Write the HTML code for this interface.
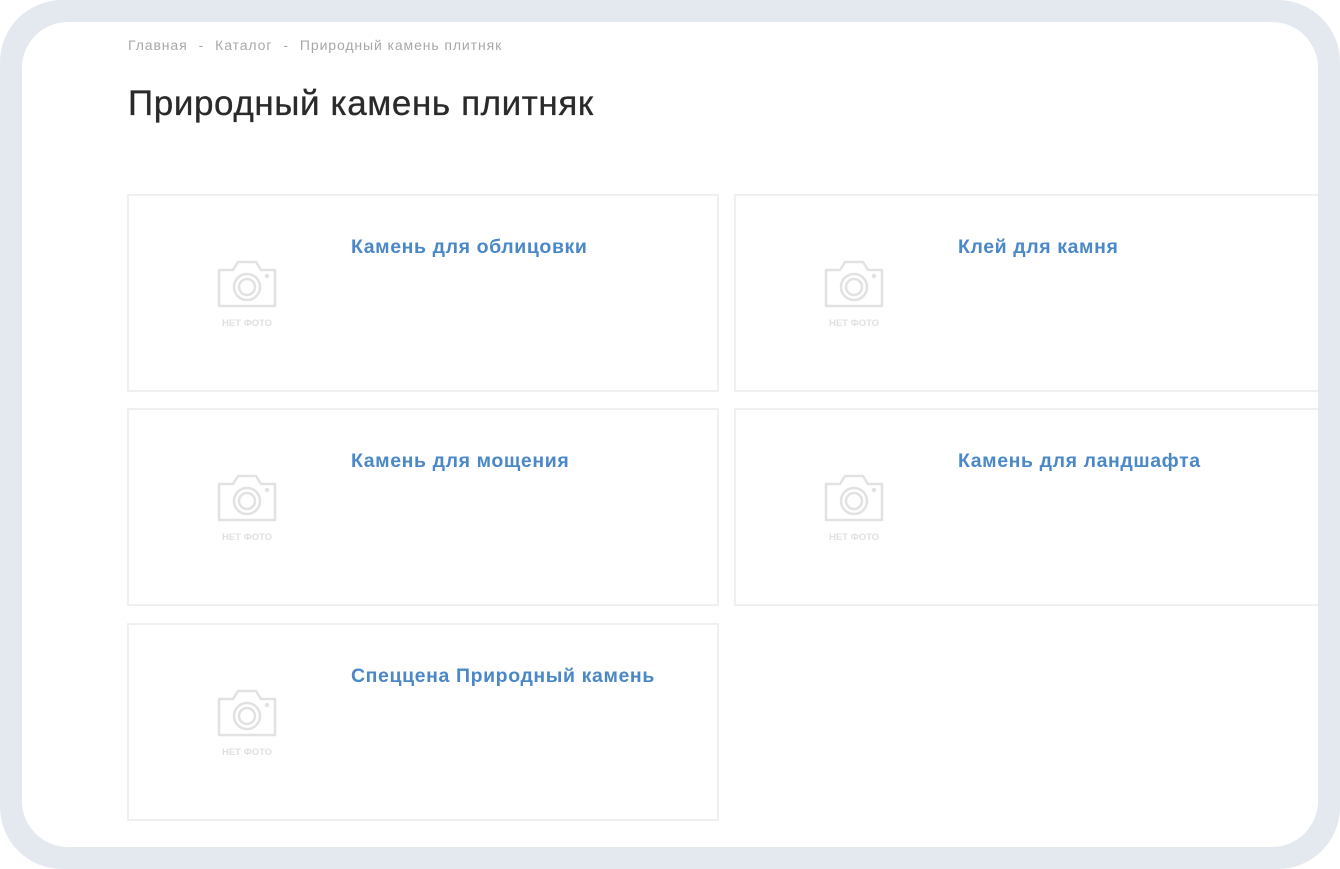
<!DOCTYPE html>
<html><head><meta charset="utf-8"><style>
*{margin:0;padding:0;box-sizing:border-box}
body{width:1340px;height:869px;background:#fff;font-family:"Liberation Sans","DejaVu Sans",sans-serif;overflow:hidden;position:relative}
.frame{position:absolute;left:0;top:0;width:1340px;height:869px;background:#e4e9f0;border-radius:62px}
.inner{position:absolute;left:22px;top:22px;width:1296px;height:825px;background:#fff;border-radius:46px;overflow:hidden}
.bc{position:absolute;left:106px;top:15px;font-size:14px;color:#a8a8a8;letter-spacing:0.9px}
.bc span{margin:0 11px}
h1{position:absolute;left:106px;top:62px;font-size:35px;font-weight:normal;color:#2a2a2a;letter-spacing:0.6px;-webkit-text-stroke:0.3px #2a2a2a}
.card{position:absolute;width:592px;height:198px;border:2px solid #f0f0f0;background:#fff}
.card .t{position:absolute;left:222px;top:40px;font-size:19.5px;font-weight:bold;color:#4a88c8;letter-spacing:0.6px}
.card svg{position:absolute;left:88px;top:63px}
.card .n{position:absolute;left:86px;top:122px;width:64px;text-align:center;font-size:9.5px;font-weight:bold;color:#e0e0e0}
</style></head><body>
<div class="frame"><div class="inner">
<div class="bc">Главная<span>-</span>Каталог<span>-</span>Природный камень плитняк</div>
<h1>Природный камень плитняк</h1>
<div class="card" style="left:105px;top:172px"><svg width="60" height="50" viewBox="0 0 60 50" fill="none" stroke="#e2e2e2" stroke-width="2.5"><path d="M2 11h14l5-8h18l5 8h14v36H2z" stroke-linejoin="round"/><circle cx="30" cy="28" r="13"/><circle cx="30" cy="28" r="8"/><circle cx="50" cy="17" r="1" fill="#e2e2e2"/></svg><div class="n">НЕТ ФОТО</div><div class="t">Камень для облицовки</div></div>
<div class="card" style="left:712px;top:172px"><svg width="60" height="50" viewBox="0 0 60 50" fill="none" stroke="#e2e2e2" stroke-width="2.5"><path d="M2 11h14l5-8h18l5 8h14v36H2z" stroke-linejoin="round"/><circle cx="30" cy="28" r="13"/><circle cx="30" cy="28" r="8"/><circle cx="50" cy="17" r="1" fill="#e2e2e2"/></svg><div class="n">НЕТ ФОТО</div><div class="t">Клей для камня</div></div>
<div class="card" style="left:105px;top:386px"><svg width="60" height="50" viewBox="0 0 60 50" fill="none" stroke="#e2e2e2" stroke-width="2.5"><path d="M2 11h14l5-8h18l5 8h14v36H2z" stroke-linejoin="round"/><circle cx="30" cy="28" r="13"/><circle cx="30" cy="28" r="8"/><circle cx="50" cy="17" r="1" fill="#e2e2e2"/></svg><div class="n">НЕТ ФОТО</div><div class="t">Камень для мощения</div></div>
<div class="card" style="left:712px;top:386px"><svg width="60" height="50" viewBox="0 0 60 50" fill="none" stroke="#e2e2e2" stroke-width="2.5"><path d="M2 11h14l5-8h18l5 8h14v36H2z" stroke-linejoin="round"/><circle cx="30" cy="28" r="13"/><circle cx="30" cy="28" r="8"/><circle cx="50" cy="17" r="1" fill="#e2e2e2"/></svg><div class="n">НЕТ ФОТО</div><div class="t">Камень для ландшафта</div></div>
<div class="card" style="left:105px;top:601px"><svg width="60" height="50" viewBox="0 0 60 50" fill="none" stroke="#e2e2e2" stroke-width="2.5"><path d="M2 11h14l5-8h18l5 8h14v36H2z" stroke-linejoin="round"/><circle cx="30" cy="28" r="13"/><circle cx="30" cy="28" r="8"/><circle cx="50" cy="17" r="1" fill="#e2e2e2"/></svg><div class="n">НЕТ ФОТО</div><div class="t">Спеццена Природный камень</div></div>
</div></div>
</body></html>
